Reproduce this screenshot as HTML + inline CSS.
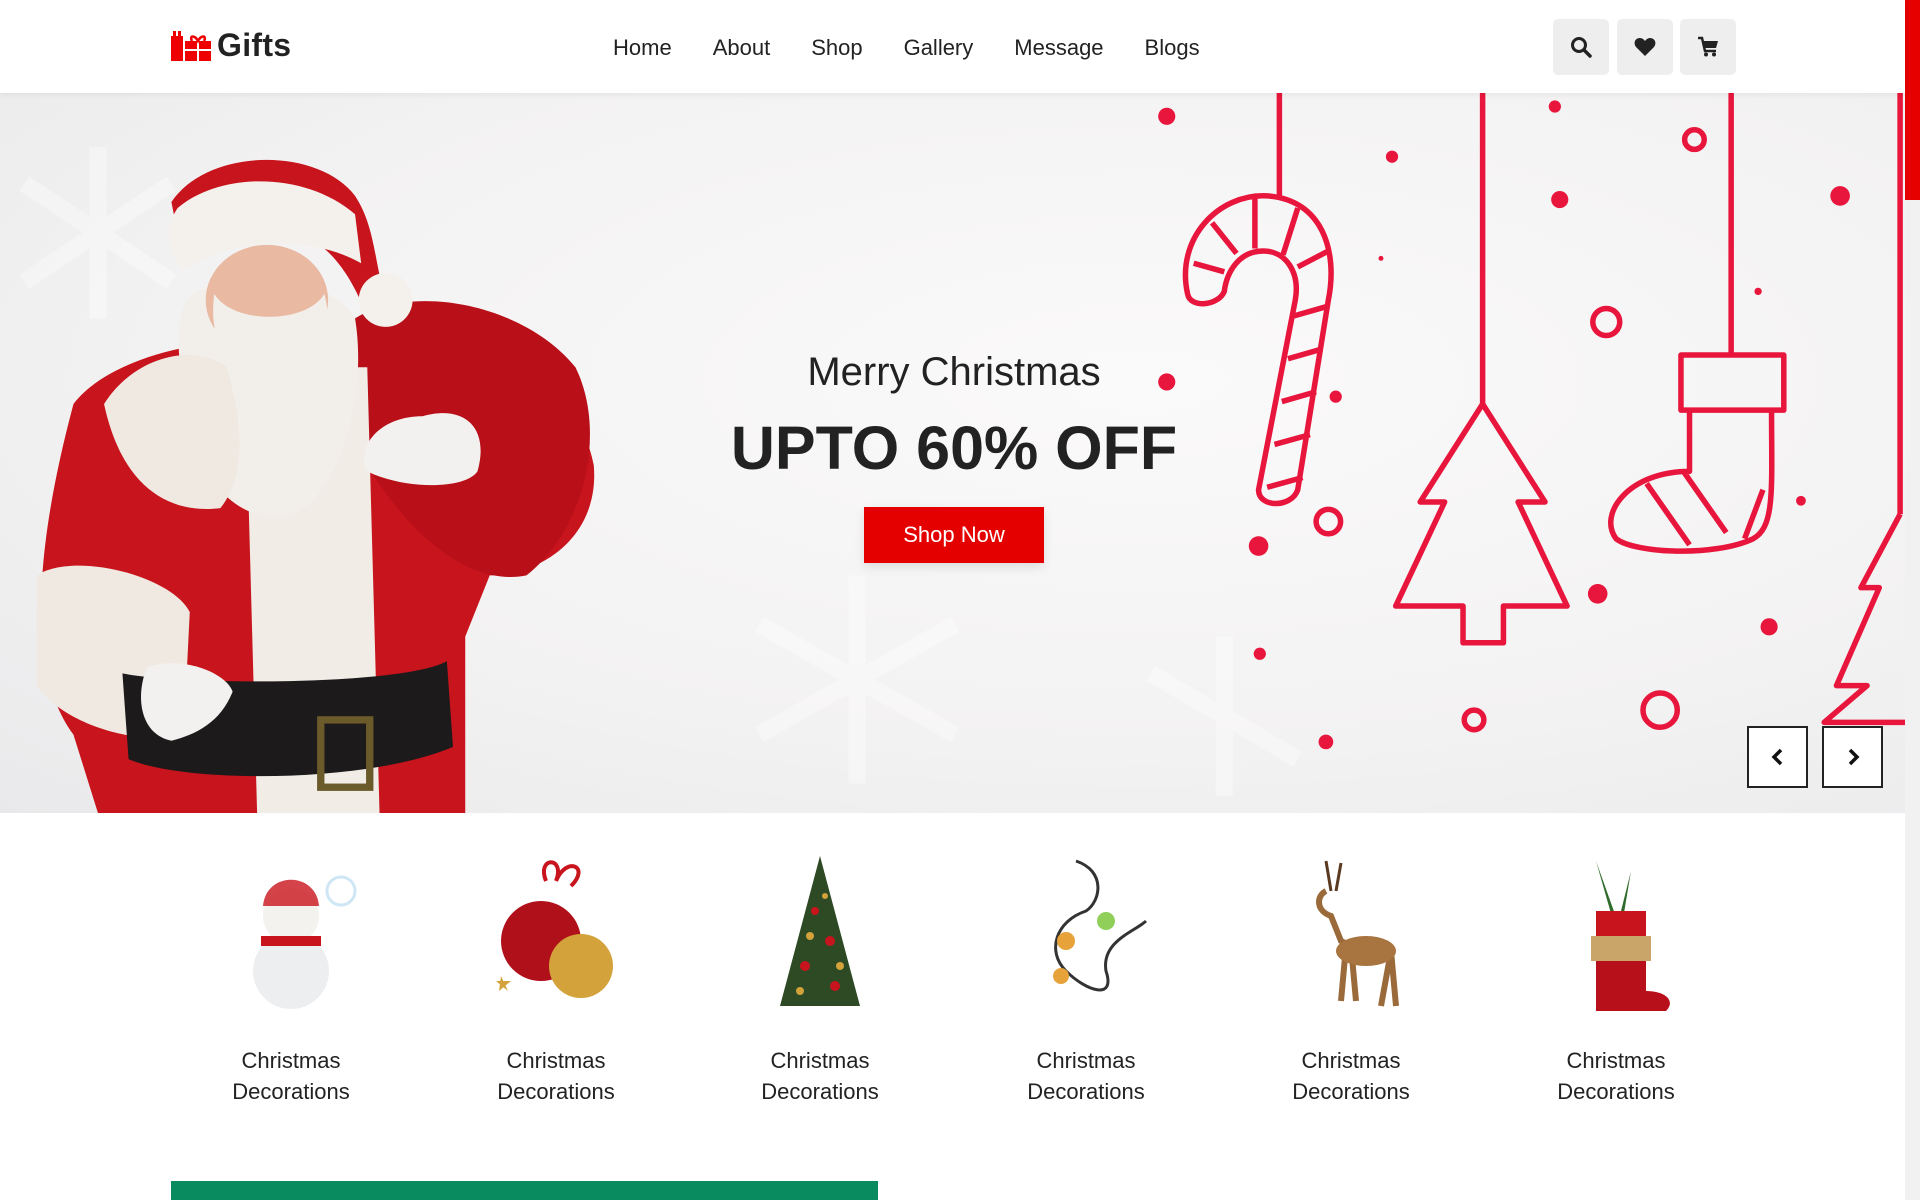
<!DOCTYPE html>
<html><head><meta charset="utf-8"><style>
*{margin:0;padding:0;box-sizing:border-box}
html,body{width:1920px;height:1200px;overflow:hidden;background:#fff;font-family:"Liberation Sans",sans-serif;color:#222}
.hdr{position:absolute;left:0;top:0;width:1905px;height:93px;background:#fff;box-shadow:0 2px 6px rgba(0,0,0,.06);z-index:3}
.logo{position:absolute;left:171px;top:27px;display:flex;align-items:center}
.logo span{font-weight:bold;font-size:32px;color:#222;margin-left:6px;letter-spacing:.3px}
.nav{position:absolute;top:35px;left:613px;display:flex;font-size:22px;color:#222}
.nav a{margin-right:41px}
.btn{position:absolute;top:19px;width:56px;height:56px;background:#eee;border-radius:5px;display:flex;align-items:center;justify-content:center}
.sb{position:absolute;right:0;top:0;width:15px;height:1200px;background:#f1f1f1}
.sb div{width:15px;height:200px;background:#e60000}
.hero{position:absolute;left:0;top:93px;width:1905px;height:720px;background:radial-gradient(ellipse at 60% 40%,#fbfafa 0%,#f3f2f2 60%,#e9e9eb 100%);overflow:hidden}
.t1{position:absolute;left:0;width:1908px;text-align:center;top:257px;font-size:40px;color:#222}
.t2{position:absolute;left:0;width:1908px;text-align:center;top:320px;font-size:61px;font-weight:bold;color:#222}
.shop{position:absolute;left:864px;top:414px;width:180px;height:56px;background:#e50000;color:#fff;font-size:22px;display:flex;align-items:center;justify-content:center;box-shadow:0 4px 10px rgba(0,0,0,.1)}
.arr{position:absolute;top:633px;width:61px;height:62px;border:2px solid #222;background:#fff;display:flex;align-items:center;justify-content:center}
.cat{position:absolute;top:851px;width:200px;text-align:center}
.cat svg{display:block;margin:0 auto}
.cat p{font-size:22px;line-height:31px;color:#222;margin-top:29px}
.green{position:absolute;left:171px;top:1181px;width:707px;height:19px;background:#0a8a5f}
</style></head><body>
<div class="hdr">
 <div class="logo">
  <svg width="40" height="30" viewBox="0 0 40 30"><rect x="0" y="5" width="12" height="25" fill="#e00"/><rect x="2" y="0" width="3" height="6" fill="#e00"/><rect x="7" y="0" width="3" height="6" fill="#e00"/><rect x="14" y="10" width="26" height="20" fill="#e00"/><rect x="14" y="18" width="26" height="2" fill="#fff"/><rect x="26" y="10" width="2" height="20" fill="#fff"/><path d="M21 10 C18 4 24 4 27 10 C30 4 36 4 33 10" fill="none" stroke="#e00" stroke-width="2.5"/></svg>
  <span>Gifts</span>
 </div>
 <div class="nav"><a>Home</a><a>About</a><a>Shop</a><a>Gallery</a><a>Message</a><a>Blogs</a></div>
 <div class="btn" style="left:1553px"><svg width="22" height="22" viewBox="0 0 22 22"><circle cx="9" cy="9" r="6.5" fill="none" stroke="#222" stroke-width="3"/><path d="M14 14 L20 20" stroke="#222" stroke-width="3.5" stroke-linecap="round"/></svg></div>
 <div class="btn" style="left:1617px"><svg width="22" height="20" viewBox="0 0 22 20"><path d="M11 19 L2 10 C-1 6 1 1 6 1 C8 1 10 2.5 11 4 C12 2.5 14 1 16 1 C21 1 23 6 20 10 Z" fill="#222"/></svg></div>
 <div class="btn" style="left:1680px"><svg width="22" height="22" viewBox="0 0 22 22"><path d="M1 2 H5 L8 15 H19" fill="none" stroke="#222" stroke-width="2.5"/><path d="M6 5 H21 L19 12 H8 Z" fill="#222"/><circle cx="9" cy="18.5" r="2" fill="#222"/><circle cx="17" cy="18.5" r="2" fill="#222"/></svg></div>
</div>
<div class="sb"><div></div></div>
<div class="hero">
 <svg width="1905" height="720" viewBox="0 76 1556 588" style="position:absolute;left:0;top:0">
  <g fill="none" stroke="#fff" stroke-width="14" opacity=".35">
   <path d="M700 470 L700 640 M620 510 L780 600 M620 600 L780 510"/>
   <path d="M80 120 L80 260 M20 150 L140 230 M20 230 L140 150"/>
   <path d="M1000 520 L1000 650 M940 550 L1060 620"/>
  </g>
  <path d="M60 330 C90 290 180 270 250 280 L300 300 C380 290 470 300 485 380 C490 440 440 470 400 470 L380 520 L380 664 L80 664 L60 600 C30 560 20 480 60 330Z" fill="#c8141c"/>
  <path d="M290 260 C340 230 430 250 470 300 C495 350 480 430 430 470 C380 480 330 430 300 380 C280 330 270 290 290 260Z" fill="#b80f18"/>
  <path d="M200 300 L300 300 L310 664 L210 664 Z" fill="#f1ece6"/>
  <path d="M30 470 C60 450 140 470 155 500 L150 600 C110 610 50 590 30 560Z" fill="#efe9e2"/>
  <path d="M100 550 C150 560 330 560 365 540 L370 610 C300 640 150 640 105 620Z" fill="#1c1a1a"/>
  <rect x="262" y="588" width="40" height="55" fill="none" stroke="#6b5a2a" stroke-width="6"/>
  <path d="M345 340 C380 330 400 350 390 385 C380 400 330 400 300 385 C290 365 310 340 345 340Z" fill="#f3f1ef"/>
  <path d="M120 545 C150 535 185 550 190 565 C180 590 160 600 140 605 C115 600 110 570 120 545Z" fill="#f3f1ef"/>
  <path d="M150 250 C160 220 270 220 290 260 C300 320 280 400 240 420 C200 430 170 400 160 360 C150 320 140 280 150 250Z" fill="#f2eeea"/>
  <path d="M85 330 C110 290 160 280 185 300 C200 350 200 390 180 415 C140 420 100 400 85 330Z" fill="#efe9e2"/>
  <ellipse cx="218" cy="245" rx="50" ry="45" fill="#e9b9a2"/>
  <path d="M175 240 C190 265 250 265 265 240 C275 280 255 300 220 300 C185 300 170 280 175 240Z" fill="#f2eeea"/>
  <path d="M140 165 C170 120 260 120 290 160 C310 190 305 230 320 250 L300 260 C290 230 270 200 250 195 C210 190 170 200 150 215Z" fill="#c8141c"/>
  <path d="M145 170 C180 140 250 140 290 175 L295 215 C260 195 200 190 150 220 C135 205 135 185 145 170Z" fill="#f4f0ec"/>
  <circle cx="315" cy="245" r="22" fill="#f4f0ec"/>
  <g fill="none" stroke="#e8163c" stroke-width="4.5" stroke-linejoin="round">
   <path d="M1045 76 V160 M1211 76 V330 M1414 76 V290 M1552 76 V420"/>
   <path d="M970 240 C960 195 995 158 1035 160 C1080 163 1093 205 1085 245 L1060 400 C1055 415 1028 415 1028 400 L1058 245 C1062 222 1050 205 1032 205 C1012 205 1002 222 1000 238 C995 250 972 252 970 240Z"/>
   <path d="M975 215 L1000 222 M990 182 L1010 207 M1025 160 L1025 203 M1060 170 L1048 208 M1085 205 L1060 218 M1085 250 L1057 258 M1080 285 L1052 293 M1075 320 L1047 328 M1070 355 L1041 363 M1064 390 L1035 398"/>
   <path d="M1211 330 L1160 410 L1180 410 L1140 495 L1195 495 L1195 525 L1228 525 L1228 495 L1280 495 L1240 410 L1262 410 Z"/>
   <path d="M1373 290 H1457 V335 H1373 Z M1380 335 V385 C1330 385 1305 420 1320 440 C1335 452 1400 455 1432 440 C1450 430 1447 400 1447 335 M1345 395 L1380 445 M1375 385 L1410 435 M1440 400 L1425 440"/>
   <path d="M1552 420 L1520 480 L1535 480 L1500 560 L1525 560 L1490 590 L1556 590"/>
  </g>
  <g fill="#e8163c">
   <circle cx="953" cy="95" r="7"/><circle cx="1137" cy="128" r="5"/><circle cx="1270" cy="87" r="5"/><circle cx="1274" cy="163" r="7"/><circle cx="1503" cy="160" r="8"/><circle cx="953" cy="312" r="7"/><circle cx="1091" cy="324" r="5"/><circle cx="1028" cy="446" r="8"/><circle cx="1029" cy="534" r="5"/><circle cx="1083" cy="606" r="6"/><circle cx="1305" cy="485" r="8"/><circle cx="1445" cy="512" r="7"/><circle cx="1471" cy="409" r="4"/><circle cx="1436" cy="238" r="3"/><circle cx="1128" cy="211" r="2"/>
  </g>
  <g fill="none" stroke="#e8163c" stroke-width="4.5">
   <circle cx="1384" cy="114" r="8"/><circle cx="1312" cy="263" r="11"/><circle cx="1085" cy="426" r="10"/><circle cx="1204" cy="588" r="8"/><circle cx="1356" cy="580" r="14"/>
  </g>
 </svg>
 <div class="t1">Merry Christmas</div>
 <div class="t2">UPTO 60% OFF</div>
 <div class="shop">Shop Now</div>
 <div class="arr" style="left:1747px"><svg width="16" height="20" viewBox="0 0 16 20"><path d="M11 3 L4 10 L11 17" fill="none" stroke="#111" stroke-width="3.5"/></svg></div>
 <div class="arr" style="left:1822px"><svg width="16" height="20" viewBox="0 0 16 20"><path d="M5 3 L12 10 L5 17" fill="none" stroke="#111" stroke-width="3.5"/></svg></div>
</div>

<div class="cat" style="left:191px"><svg width="160" height="165" viewBox="0 0 160 165"><circle cx="130" cy="40" r="14" fill="none" stroke="#cfe6f5" stroke-width="3"/><circle cx="80" cy="120" r="38" fill="#eceeef"/><circle cx="80" cy="65" r="28" fill="#f4f2ee"/><path d="M52 55 C55 20 105 20 108 55Z" fill="#c8141c" opacity=".8"/><path d="M50 85 H110 V95 H50Z" fill="#c8141c"/></svg><p>Christmas<br>Decorations</p></div>
<div class="cat" style="left:456px"><svg width="160" height="165" viewBox="0 0 160 165"><path d="M70 30 C60 5 90 5 80 30 C90 5 115 15 95 35" fill="none" stroke="#c8141c" stroke-width="4"/><circle cx="65" cy="90" r="40" fill="#b0101a"/><circle cx="105" cy="115" r="32" fill="#d4a23a"/><path d="M25 125 L32 140 L20 130 H35 L23 140Z" fill="#d4a23a"/></svg><p>Christmas<br>Decorations</p></div>
<div class="cat" style="left:720px"><svg width="160" height="165" viewBox="0 0 160 165"><path d="M80 5 L120 155 H40 Z" fill="#2d4a24"/><g fill="#c8141c"><circle cx="75" cy="60" r="4"/><circle cx="90" cy="90" r="5"/><circle cx="65" cy="115" r="5"/><circle cx="95" cy="135" r="5"/></g><g fill="#d4a23a"><circle cx="85" cy="45" r="3"/><circle cx="70" cy="85" r="4"/><circle cx="100" cy="115" r="4"/><circle cx="60" cy="140" r="4"/></g></svg><p>Christmas<br>Decorations</p></div>
<div class="cat" style="left:986px"><svg width="160" height="165" viewBox="0 0 160 165"><path d="M70 10 C100 20 95 50 80 60 C50 70 40 100 60 120 C80 140 110 150 100 120 C95 90 130 80 140 70" fill="none" stroke="#333" stroke-width="3"/><circle cx="100" cy="70" r="9" fill="#8fcf5a"/><circle cx="60" cy="90" r="9" fill="#e8a23a"/><circle cx="55" cy="125" r="8" fill="#e8a23a"/></svg><p>Christmas<br>Decorations</p></div>
<div class="cat" style="left:1251px"><svg width="160" height="165" viewBox="0 0 160 165"><path d="M55 10 L60 40 M70 12 L65 40" stroke="#5a3a20" stroke-width="3"/><path d="M55 40 C45 45 45 60 60 65 L70 90 C90 100 115 95 120 100 L125 155 M120 100 L110 155 M75 95 L70 150 M80 95 L85 150" fill="none" stroke="#9b6a3a" stroke-width="6"/><ellipse cx="95" cy="100" rx="30" ry="15" fill="#a8743f"/></svg><p>Christmas<br>Decorations</p></div>
<div class="cat" style="left:1516px"><svg width="160" height="165" viewBox="0 0 160 165"><path d="M60 10 L80 80 L95 20 L85 80Z" fill="#2f6b2a"/><rect x="60" y="60" width="50" height="30" fill="#c8141c"/><rect x="55" y="85" width="60" height="25" fill="#c9a56a"/><path d="M60 110 H110 V140 C130 140 140 150 130 160 H60Z" fill="#b8101a"/></svg><p>Christmas<br>Decorations</p></div>

<div class="green"></div>
</body></html>
